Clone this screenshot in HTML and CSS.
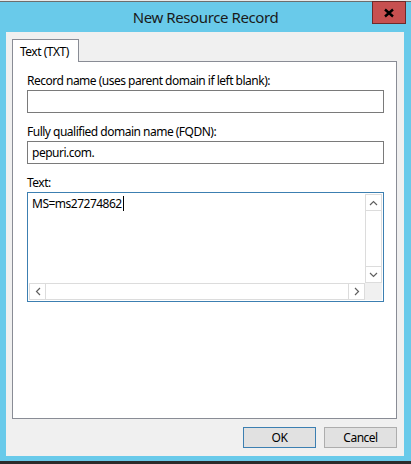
FILE: index.html
```html
<!DOCTYPE html>
<html>
<head>
<meta charset="utf-8">
<link rel="stylesheet" href="styles.css">
</head>
<body>
<div class="window">
  <div class="titlebar">
    <span class="title">New Resource Record</span>
    <div class="close">
      <svg width="12" height="10" viewBox="0 0 12 10"><path d="M2 1.5 L10 8.5 M10 1.5 L2 8.5" stroke="#000" stroke-width="2.4" fill="none"/></svg>
    </div>
  </div>
  <div class="client">
    <div class="tabs">
      <div class="tab">Text (TXT)</div>
    </div>
    <div class="panel">
      <label class="lbl">Record name (uses parent domain if left blank):</label>
      <div class="input"></div>
      <label class="lbl">Fully qualified domain name (FQDN):</label>
      <div class="input">pepuri.com.</div>
      <label class="lbl">Text:</label>
      <div class="textarea">
        <div class="ta-main">
          <div class="ta-text">MS=ms27274862<span class="caret"></span></div>
          <div class="vscroll">
            <div class="sbtn"><svg width="9" height="6" viewBox="0 0 9 6"><path d="M1 5 L4.5 1.5 L8 5" stroke="#606060" stroke-width="1.2" fill="none"/></svg></div>
            <div class="strack"></div>
            <div class="sbtn"><svg width="9" height="6" viewBox="0 0 9 6"><path d="M1 1 L4.5 4.5 L8 1" stroke="#606060" stroke-width="1.2" fill="none"/></svg></div>
          </div>
        </div>
        <div class="ta-bottom">
          <div class="hscroll">
            <div class="hbtn"><svg width="6" height="9" viewBox="0 0 6 9"><path d="M5 1 L1.5 4.5 L5 8" stroke="#606060" stroke-width="1.2" fill="none"/></svg></div>
            <div class="htrack"></div>
            <div class="hbtn"><svg width="6" height="9" viewBox="0 0 6 9"><path d="M1 1 L4.5 4.5 L1 8" stroke="#606060" stroke-width="1.2" fill="none"/></svg></div>
          </div>
          <div class="corner"></div>
        </div>
      </div>
    </div>
    <div class="buttons">
      <div class="btn default">OK</div>
      <div class="btn">Cancel</div>
    </div>
  </div>
</div>
</body>
</html>
```
FILE: styles.css
```css
html, body {
  margin: 0;
  padding: 0;
}
body {
  width: 411px;
  height: 464px;
  overflow: hidden;
  font-family: "Noto Sans", "Open Sans", sans-serif;
  font-size: 12px;
  letter-spacing: -0.5px;
  color: #000;
}
.window {
  width: 411px;
  height: 464px;
  box-sizing: border-box;
  background: #69caea;
  border-top: 1px solid #e8e8e8;
  box-shadow: inset 0 1px 0 #6d6d6d;
  border-bottom: 3px solid #2b2b2b;
  display: flex;
  flex-direction: column;
}
.titlebar {
  position: relative;
  height: 31px;
  display: flex;
  align-items: center;
  justify-content: center;
}
.title {
  font-size: 15px;
  letter-spacing: -0.4px;
  color: #1a1a1a;
  margin-top: 1px;
}
.close {
  position: absolute;
  left: 372px;
  top: 0;
  width: 32px;
  height: 21px;
  background: #c75050;
  border: 1px solid #6e2a2a;
  display: flex;
  align-items: center;
  justify-content: center;
}
.client {
  margin: 0 7px 0 6px;
  height: 424px;
  background: #f0f0f0;
  box-sizing: border-box;
  padding: 7px 7px 8px 6px;
  display: flex;
  flex-direction: column;
}
.tabs {
  display: flex;
  height: 22px;
  position: relative;
  z-index: 1;
}
.tab {
  width: 67px;
  height: 23px;
  box-sizing: border-box;
  background: #fff;
  border: 1px solid #898c95;
  border-bottom: none;
  padding: 3px 0 0 7px;
  color: #000;
}
.panel {
  height: 358px;
  box-sizing: border-box;
  background: #fff;
  border: 1px solid #898c95;
  padding: 11px 12px 0 14px;
  display: flex;
  flex-direction: column;
}
.lbl {
  display: block;
  height: 16px;
  line-height: 16px;
  margin-bottom: 1px;
}
.input {
  height: 23px;
  box-sizing: border-box;
  border: 1px solid #7a7a7a;
  padding: 2px 4px;
  line-height: 17px;
  margin-bottom: 11px;
}
.textarea {
  height: 110px;
  box-sizing: border-box;
  border: 1px solid #3c7fb1;
  padding: 1px;
  display: flex;
  flex-direction: column;
}
.ta-main {
  flex: 1;
  display: flex;
}
.ta-text {
  flex: 1;
  padding: 1px 3px;
  line-height: 17px;
}
.caret {
  display: inline-block;
  width: 1px;
  height: 15px;
  margin-left: 1px;
  background: #000;
  vertical-align: -3px;
}
.vscroll {
  width: 17px;
  display: flex;
  flex-direction: column;
  box-sizing: border-box;
  border-left: 1px solid #dcdcdc;
  border-right: 1px solid #dcdcdc;
  background: #fff;
}
.sbtn {
  height: 17px;
  box-sizing: border-box;
  border: 1px solid #dcdcdc;
  margin: 0 -1px;
  display: flex;
  align-items: center;
  justify-content: center;
}
.strack { flex: 1; }
.ta-bottom {
  height: 17px;
  display: flex;
}
.hscroll {
  flex: 1;
  display: flex;
  box-sizing: border-box;
  border-top: 1px solid #dcdcdc;
  border-bottom: 1px solid #dcdcdc;
  background: #fff;
}
.hbtn {
  width: 17px;
  box-sizing: border-box;
  border: 1px solid #dcdcdc;
  margin: -1px 0;
  display: flex;
  align-items: center;
  justify-content: center;
}
.htrack { flex: 1; }
.corner {
  width: 17px;
  background: #f0f0f0;
}
.buttons {
  margin-top: 8px;
  display: flex;
  justify-content: flex-end;
  gap: 8px;
}
.btn {
  width: 73px;
  height: 21px;
  box-sizing: border-box;
  border: 1px solid #adadad;
  background: #e1e1e1;
  display: flex;
  align-items: center;
  justify-content: center;
  color: #000;
}
.btn.default {
  border-color: #3c7fb1;
}
```
